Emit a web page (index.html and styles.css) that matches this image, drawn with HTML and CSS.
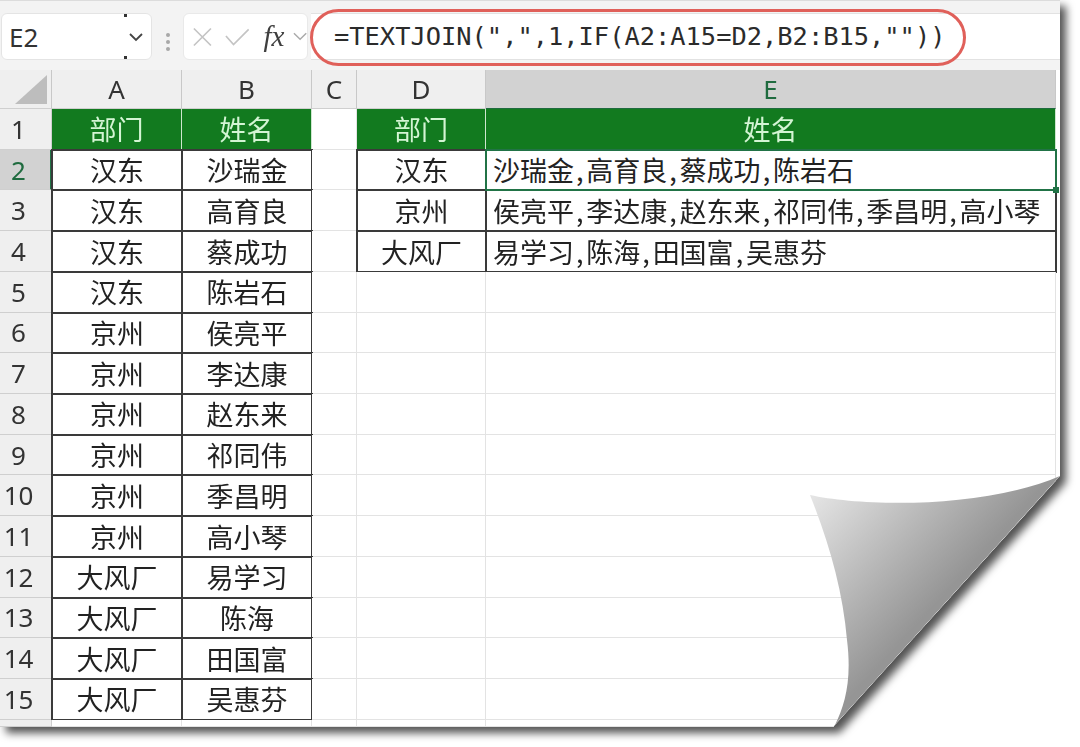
FILE: index.html
```html
<!DOCTYPE html>
<html lang="zh-CN">
<head>
<meta charset="utf-8">
<title>TEXTJOIN</title>
<link rel="stylesheet" href="styles.css">
</head>
<body>
<div class="shadow-wrap">
<div class="sheet">
  <div class="toolbar">
    <div class="namebox"><span class="name">E2</span><svg class="chev" width="16" height="10" viewBox="0 0 16 10"><path d="M2 2l6 6 6-6" fill="none" stroke="#444" stroke-width="1.8"/></svg></div>
    <div class="dots"><i></i><i></i><i></i></div>
    <div class="fxbox">
      <svg width="22" height="22" viewBox="0 0 22 22"><path d="M2 2l18 18M20 2L2 20" fill="none" stroke="#c4c4c4" stroke-width="1.8"/></svg>
      <svg width="26" height="20" viewBox="0 0 26 20"><path d="M1 9l8 9L25 2" fill="none" stroke="#c4c4c4" stroke-width="1.8"/></svg>
      <span class="fx">fx</span>
      <svg width="15" height="9" viewBox="0 0 15 9"><path d="M1 1l6.500 6.500L14 1" fill="none" stroke="#aaa" stroke-width="1.500"/></svg>
    </div>
    <div class="formula">=TEXTJOIN(",",1,IF(A2:A15=D2,B2:B15,""))</div>
    <div class="ring"></div>
  </div>
  <div class="grid">
    <div class="ch corner"><svg width="32" height="29" viewBox="0 0 32 29"><path d="M32 0v29H0z" fill="#bdbdbd"/></svg></div><div class="ch">A</div><div class="ch">B</div><div class="ch">C</div><div class="ch">D</div><div class="ch sel">E</div>

    <div class="rh">1</div><div class="head">部门</div><div class="head">姓名</div><div class="c"></div><div class="head">部门</div><div class="head">姓名</div>
    <div class="rh sel">2</div><div class="d">汉东</div><div class="d">沙瑞金</div><div class="c"></div><div class="d">汉东</div><div class="d left active">沙瑞金<b>,</b>高育良<b>,</b>蔡成功<b>,</b>陈岩石</div>
    <div class="rh">3</div><div class="d">汉东</div><div class="d">高育良</div><div class="c"></div><div class="d">京州</div><div class="d left">侯亮平<b>,</b>李达康<b>,</b>赵东来<b>,</b>祁同伟<b>,</b>季昌明<b>,</b>高小琴</div>
    <div class="rh">4</div><div class="d">汉东</div><div class="d">蔡成功</div><div class="c"></div><div class="d">大风厂</div><div class="d left">易学习<b>,</b>陈海<b>,</b>田国富<b>,</b>吴惠芬</div>
    <div class="rh">5</div><div class="d">汉东</div><div class="d">陈岩石</div><div class="c"></div><div class="c"></div><div class="c"></div>
    <div class="rh">6</div><div class="d">京州</div><div class="d">侯亮平</div><div class="c"></div><div class="c"></div><div class="c"></div>
    <div class="rh">7</div><div class="d">京州</div><div class="d">李达康</div><div class="c"></div><div class="c"></div><div class="c"></div>
    <div class="rh">8</div><div class="d">京州</div><div class="d">赵东来</div><div class="c"></div><div class="c"></div><div class="c"></div>
    <div class="rh">9</div><div class="d">京州</div><div class="d">祁同伟</div><div class="c"></div><div class="c"></div><div class="c"></div>
    <div class="rh">10</div><div class="d">京州</div><div class="d">季昌明</div><div class="c"></div><div class="c"></div><div class="c"></div>
    <div class="rh">11</div><div class="d">京州</div><div class="d">高小琴</div><div class="c"></div><div class="c"></div><div class="c"></div>
    <div class="rh">12</div><div class="d">大风厂</div><div class="d">易学习</div><div class="c"></div><div class="c"></div><div class="c"></div>
    <div class="rh">13</div><div class="d">大风厂</div><div class="d">陈海</div><div class="c"></div><div class="c"></div><div class="c"></div>
    <div class="rh">14</div><div class="d">大风厂</div><div class="d">田国富</div><div class="c"></div><div class="c"></div><div class="c"></div>
    <div class="rh">15</div><div class="d">大风厂</div><div class="d">吴惠芬</div><div class="c"></div><div class="c"></div><div class="c"></div>
    <div class="rh"></div><div class="c"></div><div class="c"></div><div class="c"></div><div class="c"></div><div class="c"></div>
  </div>
  <svg class="curl" width="1060" height="727" viewBox="0 0 1060 727">
    <defs><linearGradient id="fold" gradientUnits="userSpaceOnUse" x1="815" y1="495" x2="935" y2="605"><stop offset="0" stop-color="#e4e4e4"/><stop offset="1" stop-color="#959595"/></linearGradient></defs>
    <path d="M810 495C860 506 980 510 1060 476L835 725C845 705 852 680 847 640C843 590 828 540 810 495Z" fill="url(#fold)"/>
  </svg>
</div>
</div>
</body>
</html>
```
FILE: styles.css
```css
* { box-sizing: border-box; }
html, body { margin: 0; background: #fff; }
body { width: 1080px; height: 747px; overflow: hidden; font-family: "Noto Sans", "Noto Sans CJK SC", sans-serif; color: #2a2a2a; }

.shadow-wrap { width: 1060px; height: 727px; filter: drop-shadow(6px 6px 4px rgba(0,0,0,.68)); }
.sheet { position: relative; width: 1060px; height: 727px; background: #fff; clip-path: polygon(0 0, 1060px 0, 1060px 476px, 833px 727px, 0 727px); }

.toolbar { position: relative; display: flex; height: 70px; padding-top: 12px; background: #f3f3f3; border-top: 1px solid #dcdcdc; }
.namebox { position: relative; display: flex; align-items: center; justify-content: space-between; width: 151px; height: 47px; margin-left: 1px; padding: 0 7px 0 7px; background: #fff; border-radius: 6px; border: 1px solid #e4e4e4; }
.namebox::before, .namebox::after { content: ""; position: absolute; left: 122px; width: 3px; height: 3px; background: #333; }
.namebox::before { top: 0; }
.namebox::after { bottom: 0; }
.name { font-size: 26px; color: #333; }
.dots { display: flex; flex-direction: column; justify-content: center; gap: 3px; width: 31px; align-items: center; }
.dots i { width: 4px; height: 4px; background: #a8a8a8; border-radius: 50%; }
.fxbox { display: flex; align-items: center; width: 125px; height: 47px; padding-left: 8px; gap: 12px; background: #fff; border-radius: 6px; border: 1px solid #e9e9e9; }
.fx { margin-left: 2px; margin-right: -11px; width: 30px; font: italic 400 29px "Liberation Serif", serif; color: #3f3f3f; }
.formula { flex: 1; height: 47px; margin-left: 3px; padding-left: 23px; background: #fff; font: 25.4px/44px "DejaVu Sans Mono", monospace; color: #2b2b2b; white-space: nowrap; border-top: 1px solid #e2e2e2; border-bottom: 1px solid #e2e2e2; }
.ring { position: absolute; left: 310px; top: 8px; width: 656px; height: 57px; border: 3px solid #e0605a; border-radius: 29px; }

.grid { display: grid; grid-template-columns: 52px 130px 130px 45px 129px 570px; grid-template-rows: 39px repeat(15, 40.73px) 7px; font-family: "Noto Sans CJK SC", "Noto Sans", sans-serif; }
.ch, .rh { display: flex; align-items: center; justify-content: center; background: #efefef; border-right: 1px solid #cfcfcf; border-bottom: 1px solid #cfcfcf; font-family: "Noto Sans", sans-serif; font-size: 26px; color: #333; }
.ch { border-right-color: #c8c8c8; }
.corner { justify-content: flex-end; padding: 0 4px 4px 0; align-items: flex-end; }
.rh { padding-right: 14px; }
.ch.sel, .rh.sel { background: #d2d2d2; color: #1f6b3f; border-bottom: 1px solid #1f6b3f; }
.rh.sel { border-right: 2px solid #217346; padding-right: 13px; border-bottom-color: #cfcfcf; }
.c { background: #fff; border-right: 1px solid #e3e3e3; border-bottom: 1px solid #e3e3e3; }
.head { display: flex; align-items: center; justify-content: center; padding-bottom: 1px; background: #127a1f; color: #d4f5d4; font-size: 27px; border-right: 1px solid #cfe6cf; }
.d { display: flex; align-items: center; justify-content: center; padding-bottom: 1px; background: #fff; font-size: 27px; color: #222; outline: 2px solid #3a3a3a; outline-offset: -1px; white-space: nowrap; }
.d.left { justify-content: flex-start; padding-left: 7px; }
.d b { font-weight: 400; padding: 0 2.800px 0 2px; }
.d.active { position: relative; z-index: 1; outline-color: #217346; }
.d.active::after { content: ""; position: absolute; right: -3px; bottom: -3px; width: 6px; height: 6px; background: #217346; }
.curl { position: absolute; left: 0; top: 0; }
```
